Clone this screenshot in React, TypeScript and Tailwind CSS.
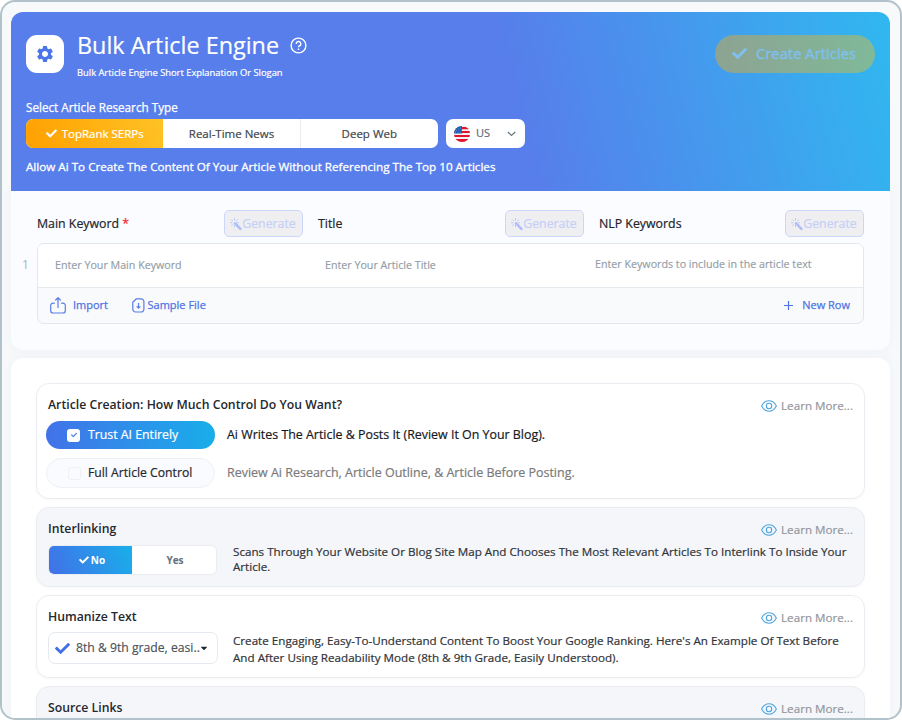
import React from "react";
import { FaCheck, FaCaretDown } from "react-icons/fa";
import { MdSettings } from "react-icons/md";

const columns = [
  { label: "Main Keyword", required: true, placeholder: "Enter Your Main Keyword" },
  { label: "Title", required: false, placeholder: "Enter Your Article Title" },
  { label: "NLP Keywords", required: false, placeholder: "Enter Keywords to include in the article text" },
];

function HelpIcon() {
  return (
    <svg width="17" height="17" viewBox="0 0 17 17" fill="none" stroke="white" strokeWidth="1.4">
      <circle cx="8.5" cy="8.5" r="7.4" />
      <path d="M6.2 6.9a2.3 2.3 0 1 1 3.3 2c-.7.4-1 .7-1 1.3" />
      <path d="M8.5 11.6v1.4" />
    </svg>
  );
}

function FlagIcon() {
  return (
    <svg width="16" height="16" viewBox="0 0 16 16">
      <clipPath id="flag">
        <circle cx="8" cy="8" r="8" />
      </clipPath>
      <g clipPath="url(#flag)">
        <path fill="#f4f0f1" d="M0 0h16v16H0z" />
        <path fill="#e0142f" d="M0 1.1h16v2.1H0zM0 5.1h16v2H0zM0 9h16v2H0zM0 13h16v3H0z" />
        <path fill="#1558ad" d="M0 0h8v7.5H0z" />
        <path
          stroke="#a9c5e8"
          strokeWidth=".7"
          strokeDasharray="1 1.4"
          d="M1 2.2h7M2 4.2h6M1 6.2h7"
        />
      </g>
    </svg>
  );
}

function WandIcon() {
  return (
    <svg width="12" height="13" viewBox="0 0 12 13" fill="none" stroke="#bcc8fa" strokeWidth="1">
      <path d="M4.5 0v2.4M4.5 7v2.4M0 4.7h2.3M6.8 4.7h2M1.3 1.5l1.6 1.6M7.8 1.5 6.2 3.1M1.3 8l1.6-1.7" />
      <path stroke="#adbcfa" strokeWidth="2.4" d="m4.4 4.7 6.7 7" />
    </svg>
  );
}

function ImportIcon() {
  return (
    <svg
      width="16"
      height="17"
      viewBox="0 0 16 17"
      fill="none"
      stroke="#5b7cea"
      strokeWidth="1.2"
      strokeLinecap="round"
      strokeLinejoin="round"
    >
      <path d="M4.4 6.2H3.2C1.6 6.2.7 7.2.7 8.6v4.8c0 1.6 1 2.6 2.5 2.6h9.6c1.6 0 2.5-1 2.5-2.6V8.6c0-1.5-.9-2.4-2.5-2.4h-1.2" />
      <path d="M8 10.5V1M5.7 3 8 .7 10.3 3" />
    </svg>
  );
}

function SampleIcon() {
  return (
    <svg
      width="13"
      height="15"
      viewBox="0 0 13 15"
      fill="none"
      stroke="#5b7cea"
      strokeWidth="1.2"
      strokeLinejoin="round"
    >
      <path d="M4.4.8H9A2.8 2.8 0 0 1 11.9 3.6v7.6A2.8 2.8 0 0 1 9 14H3.6A2.8 2.8 0 0 1 .8 11.2V4.3z" />
      <path d="M6.5 5v5M4.6 8.3l1.9 1.9 1.9-1.9" />
    </svg>
  );
}

function EyeIcon() {
  return (
    <svg width="16" height="12" viewBox="0 0 16 12" fill="none" stroke="#4fa6e2" strokeWidth="1.1">
      <path d="M.6 6C2.5 2.4 5 .8 8 .8S13.5 2.4 15.4 6C13.5 9.6 11 11.2 8 11.2S2.5 9.6.6 6z" />
      <circle cx="8" cy="6" r="2.7" />
    </svg>
  );
}

function LearnMore() {
  return (
    <div className="mt-px flex h-[18px] shrink-0 items-center gap-[4px] pt-px text-[11.65px] text-[#92979d] [-webkit-text-stroke:0.2px]">
      <EyeIcon />
      <span>Learn More...</span>
    </div>
  );
}

function Card({
  title,
  className,
  children,
}: {
  title: string;
  className: string;
  children?: React.ReactNode;
}) {
  return (
    <section className={`shrink-0 rounded-[13px] border border-[#e9edf1] px-[11px] shadow-[0_1px_3px_#00000008] ${className}`}>
      <div className="flex h-[29px] items-start justify-between pt-[11px]">
        <h2 className="mt-px text-[12.25px] leading-[18px] font-semibold text-[#25282e]">{title}</h2>
        <LearnMore />
      </div>
      {children}
    </section>
  );
}

function Hero() {
  return (
    <header className="relative h-[179px] rounded-t-[12px] bg-[linear-gradient(76deg,#577eeb_57%,#2fb9f0_101%)] px-[15px] text-white">
      <div className="flex h-[64px] items-start pt-[23px]">
        <div className="flex h-[38px] w-[38px] items-center justify-center rounded-[11px] bg-white">
          <MdSettings size={20} color="#4c76e8" />
        </div>
        <div className="ml-[13px] -mt-[7px]">
          <div className="flex items-center gap-[11px]">
            <h1 className="text-[23.4px] leading-[34px] [-webkit-text-stroke:0.2px]">Bulk Article Engine</h1>
            <HelpIcon />
          </div>
          <p className="mt-[4px] text-[9.35px] leading-[14px] [-webkit-text-stroke:0.2px]">Bulk Article Engine Short Explanation Or Slogan</p>
        </div>
        <button className="ml-auto flex h-[38px] w-[160px] items-center justify-center gap-[9px] rounded-full bg-[linear-gradient(90deg,#8da392,#80b999)] pr-[2px] pb-px text-[14.85px] text-[#7fc0ee] [-webkit-text-stroke:0.35px]">
          <FaCheck size={15} />
          Create Articles
        </button>
      </div>
      <p className="mt-[22px] text-[11.7px] leading-[18px] [-webkit-text-stroke:0.25px]">Select Article Research Type</p>
      <div className="mt-[3px] flex gap-[8px] text-[11.5px] text-[#41464d] [-webkit-text-stroke:0.2px]">
        <div className="grid h-[29px] w-[412px] grid-cols-3 overflow-hidden rounded-[7px] bg-white">
          <div className="flex items-center justify-center gap-[5px] bg-[linear-gradient(65deg,#ffa000,#ffc225)] text-white">
            <FaCheck size={11} />
            TopRank SERPs
          </div>
          <div className="flex items-center justify-center border-r border-[#e9edf1]">Real-Time News</div>
          <div className="flex items-center justify-center">Deep Web</div>
        </div>
        <div className="flex h-[29px] w-[79px] items-center rounded-[7px] bg-white pl-[8px] text-[#636b75]">
          <FlagIcon />
          <span className="ml-[6px] text-[11px]">US</span>
          <svg className="mr-[9px] ml-auto" width="9" height="6" viewBox="0 0 9 6" fill="none" stroke="#697684" strokeWidth="1.2">
            <path d="m.8 1 3.7 3.5L8.2 1" />
          </svg>
        </div>
      </div>
      <p className="mt-[10px] text-[11.67px] leading-[18px] [-webkit-text-stroke:0.3px]">
        Allow Ai To Create The Content Of Your Article Without Referencing The Top 10 Articles
      </p>
    </header>
  );
}

function KeywordTable() {
  return (
    <div className="h-[159px] rounded-b-[12px] bg-[#fbfcff] pr-[25px] pl-[10px] shadow-[0_0_8px_#e8eef380]">
      <div className="grid grid-cols-[281px_281px_265px] pt-[19px] pl-[16px]">
        {columns.map((c) => (
          <div key={c.label} className="flex h-[27px] items-center justify-between pr-[15px] last:pr-0">
            <span className="pt-px text-[12.35px] text-[#22252a] [-webkit-text-stroke:0.2px]">
              {c.label}
              {c.required && <span className="text-[#f0222b]"> *</span>}
            </span>
            <button className="flex h-[27px] w-[79px] items-center justify-center rounded-[5px] border border-[#cbd6fa] bg-[#efeff1] pt-px pr-px text-[12.3px] text-[#c6cff8] [-webkit-text-stroke:0.2px]">
              <WandIcon />
              Generate
            </button>
          </div>
        ))}
      </div>
      <div className="mt-[6px] flex">
        <span className="w-[16px] pt-[13px] pl-px text-[12px] text-[#a9b2bb]">1</span>
        <div className="h-[81px] w-[827px] rounded-[7px] border border-[#e1e7ec] bg-[#f8fafc]">
          <div className="grid h-[44px] grid-cols-[270px_270px_1fr] items-center rounded-t-[6px] border-b border-[#e5eaee] bg-white pl-[17px] text-[10.7px] text-[#929da7] [-webkit-text-stroke:0.15px]">
            {columns.map((c) => (
              <span key={c.label} className="whitespace-nowrap last:pb-[2px]">
                {c.placeholder}
              </span>
            ))}
          </div>
          <div className="flex h-[35px] items-center pr-[13px] pl-[12px] text-[11px] text-[#4f73e3] [-webkit-text-stroke:0.25px]">
            <ImportIcon />
            <span className="ml-[7px]">Import</span>
            <span className="ml-[24px] flex items-center gap-[2.5px]">
              <SampleIcon />
              Sample File
            </span>
            <svg className="mr-[9px] ml-auto" width="9" height="9" viewBox="0 0 9 9" stroke="#4f73e3" strokeWidth="1.2">
              <path d="M4.5 0v9M0 4.5h9" />
            </svg>
            <span>New Row</span>
          </div>
        </div>
      </div>
    </div>
  );
}

function Options() {
  return (
    <main className="mt-[8px] flex flex-1 flex-col gap-[8px] overflow-hidden rounded-t-[12px] bg-white px-[25px] pt-[25px] shadow-[0_0_8px_#e8eef380]">
      <Card title="Article Creation: How Much Control Do You Want?" className="h-[116px] bg-white">
        <div className="-ml-[2px] mt-[8px] flex items-center text-[12.3px] text-[#17191d] [-webkit-text-stroke:0.2px]">
          <div className="flex h-[28px] w-[169px] items-center rounded-full bg-[linear-gradient(90deg,#4272e8,#18aeea)] pl-[21px] text-white">
            <span className="mr-[8px] flex h-[13px] w-[13px] items-center justify-center rounded-[3px] bg-white">
              <FaCheck size={6} color="#4b83e9" />
            </span>
            Trust AI Entirely
          </div>
          <p className="ml-[12px] text-[12.42px]">Ai Writes The Article &amp; Posts It (Review It On Your Blog).</p>
        </div>
        <div className="-ml-[2px] mt-[9px] flex items-center text-[12.2px] text-[#7a7a7a] [-webkit-text-stroke:0.2px]">
          <div className="flex h-[30px] w-[169px] items-center rounded-full border border-[#edf1f5] bg-[#fafbfe] pl-[21px] text-[#25282d]">
            <span className="mr-[7px] h-[13px] w-[13px] rounded-[3px] border border-[#edf0f4]" />
            Full Article Control
          </div>
          <p className="ml-[12px] text-[12.48px]">Review Ai Research, Article Outline, &amp; Article Before Posting.</p>
        </div>
      </Card>

      <Card title="Interlinking" className="h-[80px] bg-[#f4f6fa]">
        <div className="flex pt-[8px]">
          <div className="flex h-[30px] w-[169px] shrink-0 overflow-hidden rounded-[6px] border border-[#e9edf1] bg-white text-[10px] font-bold text-[#64707c]">
            <div className="flex w-[83px] items-center justify-center gap-[2px] bg-[linear-gradient(65deg,#4270e8,#19afea)] pl-[3px] text-white">
              <FaCheck size={10} />
              No
            </div>
            <div className="flex flex-1 items-center justify-center pl-[2px]">Yes</div>
          </div>
          <p className="ml-[16px] text-[11.65px] leading-[14.5px] text-[#303338] [-webkit-text-stroke:0.2px]">
            Scans Through Your Website Or Blog Site Map And Chooses The Most Relevant Articles To Interlink To Inside Your
            <br />
            Article.
          </p>
        </div>
      </Card>

      <Card title="Humanize Text" className="h-[83px] bg-white">
        <div className="flex pt-[7px]">
          <div className="flex h-[32px] w-[170px] shrink-0 items-center rounded-[7px] border border-[#e5eaf0] bg-white pl-[6px] text-[12.2px] text-[#4a515a] [-webkit-text-stroke:0.15px]">
            <FaCheck size={15} color="#426ee8" />
            <span className="ml-[6px]">8th &amp; 9th grade, easi..</span>
            <FaCaretDown className="-ml-px text-[#22262c]" size={10} />
          </div>
          <p className="ml-[15px] text-[11.65px] leading-[17px] text-[#303338] [-webkit-text-stroke:0.2px]">
            Create Engaging, Easy-To-Understand Content To Boost Your Google Ranking. Here's An Example Of Text Before
            <br />
            And After Using Readability Mode (8th &amp; 9th Grade, Easily Understood).
          </p>
        </div>
      </Card>

      <Card title="Source Links" className="h-[81px] bg-[#f4f6fa]" />
    </main>
  );
}

export default function App() {
  return (
    <div className="h-[720px] w-[902px] bg-white font-['Open_Sans',sans-serif]">
      <div className="flex h-full flex-col overflow-hidden rounded-[15px] border-2 border-[#b2c2cb] bg-[#f7f9fb] pt-[10px] pr-[10px] pl-[9px] whitespace-nowrap">
        <Hero />
        <KeywordTable />
        <Options />
      </div>
    </div>
  );
}
